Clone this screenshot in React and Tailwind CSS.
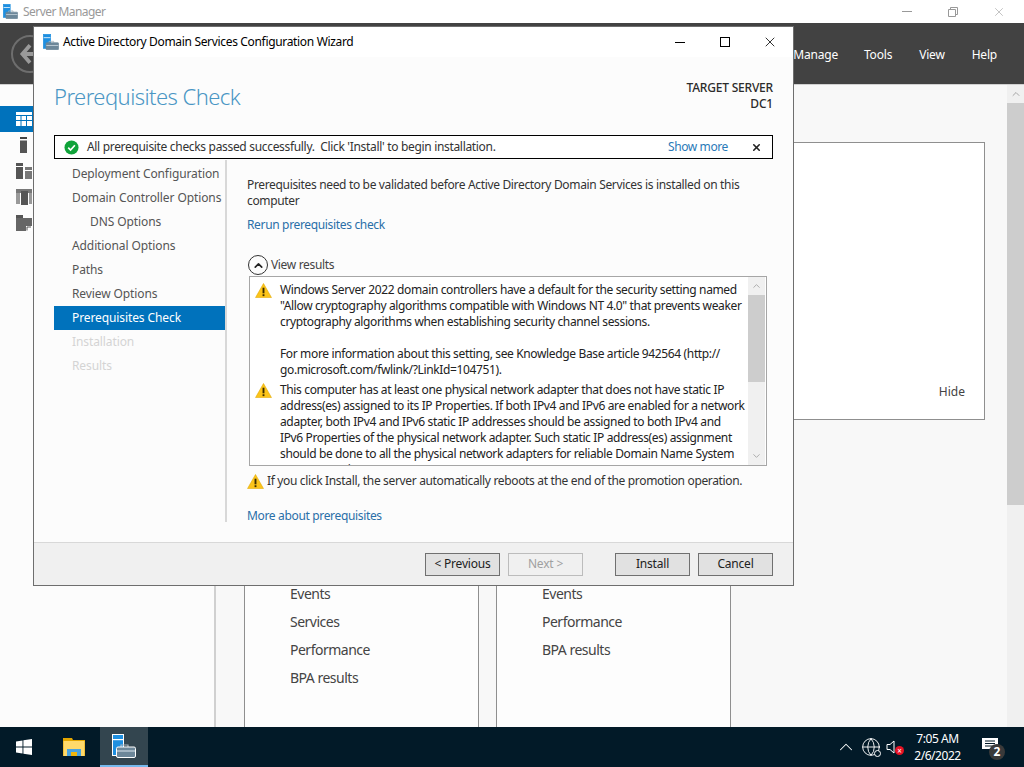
import { Globe, ChevronUp, ChevronDown, X } from "lucide-react";

const font = { fontFamily: '"Noto Sans", sans-serif' };

function ManagerIcon({ className, outline }) {
  const line = outline ? "#ffffff" : "#1e8fe0";
  return (
    <svg viewBox="0 0 24 24" className={className}>
      <rect x="0.5" y="0.5" width="11" height="21" fill="#1e8fe0" stroke={line} />
      <rect x="1" y="5" width="10" height="1.2" fill="#ffffff" />
      <path d="M9 13V11H16V13" fill="none" stroke="#a9b4bc" strokeWidth="1.2" />
      <rect x="4.5" y="13" width="19" height="10.5" rx="1.5" fill="#6d8799" stroke={outline ? "#ffffff" : "#6d8799"} />
      <rect x="5" y="16.5" width="18" height="1" fill="#dbe6ee" />
    </svg>
  );
}

function Warning({ className }) {
  return (
    <svg viewBox="0 0 18 16" className={className}>
      <path d="M9 0.5 L17.5 15.5 H0.5 Z" fill="#fcc419" stroke="#e0a800" strokeWidth="0.6" />
      <rect x="8" y="5" width="2" height="6" fill="#3a2c00" />
      <rect x="8" y="12" width="2" height="2" fill="#3a2c00" />
    </svg>
  );
}

function NavItem({ children, active, disabled, indent }) {
  let color = "text-[#555555]";
  if (active) color = "bg-[#0072bc] text-white";
  if (disabled) color = "text-[#d4d4d4]";
  return (
    <div className={`h-6 flex items-center whitespace-nowrap tracking-[-0.1px] ${indent ? "pl-9" : "pl-[18px]"} ${color}`}>
      {children}
    </div>
  );
}

function WizardButton({ children, disabled, className = "" }) {
  return (
    <div
      className={`w-[75px] h-[23px] flex items-center justify-center border ${
        disabled ? "bg-[#f0f0f0] border-[#bcbcbc] text-[#a0a0a0]" : "bg-[#e1e1e1] border-[#707070] text-[#222222]"
      } ${className}`}
    >
      {children}
    </div>
  );
}

function Wizard() {
  return (
    <div
      style={font}
      className="absolute left-[33px] top-[26px] w-[761px] h-[560px] flex flex-col bg-[#fcfcfc] border border-[#6e6e6e] text-[12px] leading-4 text-[#333333]"
    >
      {/* Title bar */}
      <div className="h-[30px] bg-white flex items-center pl-[9px] text-black shrink-0">
        <ManagerIcon className="w-[16px] h-[16px]" />
        <span className="ml-[4px] tracking-[-0.33px]">Active Directory Domain Services Configuration Wizard</span>
        <div className="ml-auto w-[10px] h-px bg-black" />
        <div className="ml-[35px] w-[10px] h-[10px] border border-black" />
        <X className="ml-[32px] mr-[15px] w-[16px] h-[16px] text-black" strokeWidth={1.2} />
      </div>

      {/* Header */}
      <div className="h-[78px] shrink-0 flex justify-between pl-5 pr-5 pt-[21px]">
        <div className="text-[22px] leading-[36px] font-light tracking-[-0.55px] text-[#4a96c4]">Prerequisites Check</div>
        <div className="text-right tracking-[-0.2px] text-[#2b2b2b] font-medium leading-4 mt-[2px]">
          <div>TARGET SERVER</div>
          <div>DC1</div>
        </div>
      </div>

      {/* Banner */}
      <div className="mx-5 h-[24px] shrink-0 border border-black bg-white flex items-center pl-[9px] pr-[10px] text-[#333333]">
        <svg viewBox="0 0 16 16" className="w-[15px] h-[15px]">
          <circle cx="8" cy="8" r="7.5" fill="#10a33a" />
          <path d="M4.5 8.2 7 10.7 11.6 5.6" fill="none" stroke="#ffffff" strokeWidth="1.8" />
        </svg>
        <span className="ml-[8px] tracking-[-0.32px] whitespace-pre">All prerequisite checks passed successfully.  Click 'Install' to begin installation.</span>
        <span className="ml-auto text-[#2a7ab8] tracking-[-0.4px]">Show more</span>
        <X className="ml-[23px] w-[11px] h-[11px] text-[#222222]" strokeWidth={3.5} />
      </div>

      {/* Body */}
      <div className="flex-1 flex pl-5 pt-px min-h-0">
        <div className="w-[171px] shrink-0 pt-[2px]">
          <NavItem>Deployment Configuration</NavItem>
          <NavItem>Domain Controller Options</NavItem>
          <NavItem indent>DNS Options</NavItem>
          <NavItem>Additional Options</NavItem>
          <NavItem>Paths</NavItem>
          <NavItem>Review Options</NavItem>
          <NavItem active>Prerequisites Check</NavItem>
          <NavItem disabled>Installation</NavItem>
          <NavItem disabled>Results</NavItem>
        </div>
        <div className="w-[2px] h-[362px] bg-[#d8d8d8] shrink-0" />
        <div className="flex-1 pl-5 pr-5 pt-[17px] min-w-0 tracking-[-0.34px]">
          <p>
            Prerequisites need to be validated before Active Directory Domain Services is installed on this
            <br />
            computer
          </p>
          <div className="mt-2 text-[#2a6fa8]">Rerun prerequisites check</div>

          <div className="mt-[23px] ml-px flex items-center h-[18px] text-[#444444]">
            <span className="w-[20px] h-[20px] rounded-full border border-[#333333] flex items-center justify-center">
              <ChevronUp className="w-[13px] h-[13px] text-[#222222]" strokeWidth={3} />
            </span>
            <span className="ml-[3px]">View results</span>
          </div>

          <div className="mt-[2px] ml-[2px] h-[190px] w-[518px] border border-[#a6a6a6] bg-white flex overflow-hidden">
            <div className="flex-1 overflow-hidden pt-[5px] pl-[5px] text-[#222222] min-w-0">
              <div className="flex h-[100px]">
                <Warning className="w-[17px] h-[15px] mt-[1px] shrink-0" />
                <p className="ml-2 whitespace-nowrap tracking-[-0.36px]">
                  Windows Server 2022 domain controllers have a default for the security setting named
                  <br />
                  "Allow cryptography algorithms compatible with Windows NT 4.0" that prevents weaker
                  <br />
                  cryptography algorithms when establishing security channel sessions.
                  <br />
                  <br />
                  For more information about this setting, see Knowledge Base article 942564 (http://
                  <br />
                  go.microsoft.com/fwlink/?LinkId=104751).
                </p>
              </div>
              <div className="flex">
                <Warning className="w-[17px] h-[15px] mt-[1px] shrink-0" />
                <p className="ml-2 whitespace-nowrap tracking-[-0.36px]">
                  This computer has at least one physical network adapter that does not have static IP
                  <br />
                  address(es) assigned to its IP Properties. If both IPv4 and IPv6 are enabled for a network
                  <br />
                  adapter, both IPv4 and IPv6 static IP addresses should be assigned to both IPv4 and
                  <br />
                  IPv6 Properties of the physical network adapter. Such static IP address(es) assignment
                  <br />
                  should be done to all the physical network adapters for reliable Domain Name System
                  <br />
                  (DNS) operation.
                </p>
              </div>
            </div>
            <div className="w-[17px] mr-px shrink-0 bg-[#f0f0f0] flex flex-col items-center">
              <ChevronUp className="w-[11px] h-[18px] text-[#a6a6a6] shrink-0" strokeWidth={2} />
              <div className="w-full h-[87px] bg-[#cdcdcd]" />
              <ChevronDown className="w-[11px] h-[18px] mt-auto text-[#a6a6a6]" strokeWidth={2} />
            </div>
          </div>

          <div className="mt-[6px] flex items-center h-[18px]">
            <Warning className="w-[17px] h-[15px] shrink-0" />
            <span className="ml-[3px] text-[#333333] whitespace-nowrap">
              If you click Install, the server automatically reboots at the end of the promotion operation.
            </span>
          </div>
          <div className="mt-[18px] text-[#2a6fa8]">More about prerequisites</div>
        </div>
      </div>

      {/* Footer */}
      <div className="h-[43px] shrink-0 bg-[#f0f0f0] border-t border-[#d8d8d8] flex items-center justify-end pr-5 text-[12px] tracking-[-0.2px]">
        <WizardButton>&lt; Previous</WizardButton>
        <WizardButton disabled className="ml-2">Next &gt;</WizardButton>
        <WizardButton className="ml-8">Install</WizardButton>
        <WizardButton className="ml-2">Cancel</WizardButton>
      </div>
    </div>
  );
}

function SideIcon({ children, active }) {
  return (
    <div className={`h-[26px] flex items-center justify-start pl-4 ${active ? "bg-[#0072bc]" : ""}`}>{children}</div>
  );
}

function TileCard({ items }) {
  return (
    <div className="w-[235px] h-[200px] bg-[#fdfdfd] border border-[#8f8f8f] border-b-0 pl-[45px] pt-[38px] text-[14px] text-[#444444] tracking-[-0.5px]">
      {items.map((item) => (
        <div key={item} className="h-7 leading-7 whitespace-nowrap">{item}</div>
      ))}
    </div>
  );
}

function Taskbar() {
  return (
    <div className="h-10 shrink-0 bg-[#021a28] flex items-stretch text-white text-[12px]">
      <div className="w-[48px] flex items-center justify-center">
        <svg viewBox="0 0 16 16" className="w-4 h-4" fill="#ffffff">
          <path d="M0 2.4 6.5 1.4V7.6H0ZM7.4 1.3 16 0V7.6H7.4ZM0 8.4H6.5V14.6L0 13.6ZM7.4 8.4H16V16L7.4 14.7Z" />
        </svg>
      </div>
      <div className="w-[52px] flex items-center justify-center">
        <svg viewBox="0 0 22 18" className="w-[22px] h-[18px]">
          <path d="M0 0H9L10 2H22V18H0Z" fill="#e4a600" />
          <rect x="0.5" y="3" width="21" height="15" fill="#ffd96b" />
          <path d="M4 18V11H18V18H14V14H8V18Z" fill="#4aa3e0" />
          <rect x="8" y="14" width="6" height="4" fill="#f2b70d" />
        </svg>
      </div>
      <div className="w-[48px] bg-[#33454f] border-b-2 border-[#76b9ed] flex items-center justify-start pl-[12px]">
        <ManagerIcon outline className="w-[24px] h-[24px]" />
      </div>
      <div className="ml-auto flex items-center">
        <ChevronUp className="w-[22px] h-[22px]" strokeWidth={1.1} />
        <div className="relative ml-[4px]">
          <Globe className="w-[20px] h-[20px]" strokeWidth={1.1} />
          <span className="absolute right-0 bottom-0 w-[7px] h-[7px] rounded-full border border-white bg-[#021a28]" />
        </div>
        <div className="relative ml-[5px] w-[18px] h-[16px]">
          <svg viewBox="0 0 12 16" className="w-[12px] h-[16px]" fill="none" stroke="#ffffff" strokeWidth="1">
            <path d="M1 5.5H4L8 2V14L4 10.5H1Z" />
          </svg>
          <span className="absolute right-0 bottom-0 w-[9px] h-[9px] bg-[#e81123] rounded-full text-white text-[8px] leading-[9px] text-center">×</span>
        </div>
        <div className="ml-[9px] w-[49px] text-center leading-[17px] text-[12px] tracking-[-0.45px]" style={font}>
          <div>7:05 AM</div>
          <div>2/6/2022</div>
        </div>
        <div className="relative ml-[20px] mr-[25px] w-[17px] h-[20px]">
          <svg viewBox="0 0 16 14" className="w-[16px] h-[14px] mt-[1px]">
            <path d="M0 0H16V11H0Z" fill="#ffffff" />
            <path d="M3 3H13M3 5.5H13M3 8H13" stroke="#021a28" strokeWidth="1" />
          </svg>
          <span className="absolute left-[7px] top-[7px] w-[16px] h-[16px] rounded-full bg-[#3a3a3a] text-white text-[12px] leading-[16px] text-center font-bold" style={font}>2</span>
        </div>
      </div>
    </div>
  );
}

export default function App() {
  return (
    <div className="relative w-[1024px] h-[767px] overflow-hidden flex flex-col bg-white" style={font}>
      {/* Server Manager title bar */}
      <div className="h-[23px] shrink-0 bg-white flex items-center pl-[3px] text-[12px] text-[#999999]">
        <ManagerIcon className="w-[15px] h-[15px]" />
        <span className="ml-[5px] tracking-[-0.55px]">Server Manager</span>
        <div className="ml-auto w-[10px] h-px bg-[#999999]" />
        <svg viewBox="0 0 10 10" className="ml-[36px] w-[10px] h-[10px]" fill="none" stroke="#999999">
          <path d="M0.5 2.5H7.5V9.5H0.5ZM2.5 2.5V0.5H9.5V7.5H7.5" />
        </svg>
        <X className="ml-[34px] mr-[18px] w-[14px] h-[14px] text-[#999999]" strokeWidth={1} />
      </div>

      {/* Server Manager header */}
      <div className="h-[62px] shrink-0 bg-[#424242] border-b border-[#d0d0d0] flex items-center justify-end text-[12px] text-white pt-[3px] tracking-[-0.2px]">
        <div className="mr-auto ml-[11px] mt-[-3px] w-[38px] h-[38px] rounded-full border-2 border-[#6e6e6e] flex items-center justify-center">
          <svg viewBox="0 0 24 24" className="w-[26px] h-[26px]" fill="none" stroke="#9a9a9a" strokeWidth="3.5">
            <path d="M12 4 5 12l7 8M5 12h16" />
          </svg>
        </div>
        <span className="mr-[26px]">Manage</span>
        <span className="mr-[27px]">Tools</span>
        <span className="mr-[27px]">View</span>
        <span className="mr-[27px]">Help</span>
      </div>

      {/* Server Manager body */}
      <div className="flex-1 flex min-h-0 overflow-hidden">
        <div className="w-[216px] shrink-0 bg-[#fcfcfc] border-r-2 border-[#d0d0d0] pt-[21px]">
          <SideIcon active>
            <svg viewBox="0 0 16 14" className="w-4 h-[14px]">
              <rect width="16" height="14" fill="#ffffff" />
              <path d="M0 3.5H16M0 8.5H16M5 3V14M10.5 3V14" stroke="#0072bc" strokeWidth="1" />
            </svg>
          </SideIcon>
          <SideIcon>
            <svg viewBox="0 0 16 16" className="w-4 h-4">
              <rect x="4" y="0" width="7" height="2" fill="#444444" />
              <rect x="4" y="3.5" width="7" height="12.5" fill="#555555" />
            </svg>
          </SideIcon>
          <SideIcon>
            <svg viewBox="0 0 16 16" className="w-4 h-4">
              <rect x="0" y="0" width="7" height="16" fill="#555555" />
              <rect x="0" y="3" width="7" height="1" fill="#ffffff" />
              <rect x="9" y="4" width="7" height="12" fill="#777777" />
              <rect x="9" y="7" width="7" height="1" fill="#ffffff" />
            </svg>
          </SideIcon>
          <SideIcon>
            <svg viewBox="0 0 16 16" className="w-4 h-4">
              <rect x="0" y="0" width="16" height="4" fill="#777777" />
              <rect x="0" y="4" width="4" height="11" fill="#999999" />
              <rect x="5" y="2" width="7" height="14" fill="#555555" />
              <rect x="13" y="4" width="3" height="11" fill="#999999" />
            </svg>
          </SideIcon>
          <SideIcon>
            <svg viewBox="0 0 16 16" className="w-4 h-4">
              <rect x="0" y="0" width="7" height="3" fill="#555555" />
              <rect x="0" y="3" width="16" height="13" fill="#666666" />
              <path d="M10 11H16V16H10Z" fill="#ffffff" />
              <path d="M11 15.5V12H15" fill="none" stroke="#555555" />
            </svg>
          </SideIcon>
        </div>

        <div className="flex-1 bg-[#f8f8f8] pl-[28px] pt-[57px] min-w-0">
          <div className="w-[741px] h-[278px] bg-white border border-[#8f8f8f] flex items-end justify-end pr-[19px] pb-[18px] text-[12px] text-[#444444]">
            Hide
          </div>
          <div className="flex gap-[17px] mt-[121px]">
            <TileCard items={["Events", "Services", "Performance", "BPA results"]} />
            <TileCard items={["Events", "Performance", "BPA results"]} />
          </div>
        </div>

        {/* Page scrollbar */}
        <div className="w-[17px] shrink-0 bg-[#f0f0f0] flex flex-col items-center">
          <ChevronUp className="w-[12px] h-[18px] text-[#a6a6a6] shrink-0" strokeWidth={2} />
          <div className="w-full h-[402px] bg-[#cdcdcd]" />
        </div>
      </div>

      <Taskbar />
      <Wizard />
    </div>
  );
}
